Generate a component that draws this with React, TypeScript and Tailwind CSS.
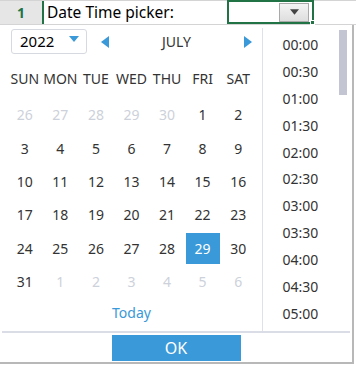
const weeks: { d: number; muted?: boolean }[][] = [
  [26, 27, 28, 29, 30].map((d) => ({ d, muted: true })).concat([{ d: 1 }, { d: 2 }]),
  [3, 4, 5, 6, 7, 8, 9].map((d) => ({ d })),
  [10, 11, 12, 13, 14, 15, 16].map((d) => ({ d })),
  [17, 18, 19, 20, 21, 22, 23].map((d) => ({ d })),
  [24, 25, 26, 27, 28, 29, 30].map((d) => ({ d })),
  [{ d: 31 }].concat([1, 2, 3, 4, 5, 6].map((d) => ({ d, muted: true }))),
];

const days = ["SUN", "MON", "TUE", "WED", "THU", "FRI", "SAT"];
const times = ["00:00", "00:30", "01:00", "01:30", "02:00", "02:30", "03:00", "03:30", "04:00", "04:30", "05:00"];

function Triangle({ dir, className }: { dir: "left" | "right" | "down"; className?: string }) {
  const pts = dir === "left" ? "8,0 8,12 0,6" : dir === "right" ? "0,0 0,12 8,6" : "0,0 10,0 5,6";
  const w = dir === "down" ? 10 : 8;
  const h = dir === "down" ? 6 : 12;
  return (
    <svg width={w} height={h} viewBox={`0 0 ${w} ${h}`} className={className}>
      <polygon points={pts} fill="currentColor" />
    </svg>
  );
}

export default function App() {
  return (
    <div
      className="relative w-[356px] h-[366px] overflow-hidden bg-white text-[#333]"
      style={{ fontFamily: '"Noto Sans", "Open Sans", sans-serif' }}
    >
      {/* spreadsheet row */}
      <div className="flex h-[25px] border-t border-[#d4d4d4] border-b border-b-[#d4d4d4]">
        <div className="w-[42px] bg-[#e6e6e6] flex items-center justify-center text-[14px] font-bold text-[#217346]">1</div>
        <div className="w-[2px] bg-[#217346]" />
        <div className="w-[183px] flex items-center pl-[3px] text-[15.5px] text-black">Date Time picker:</div>
        <div className="relative w-[87px] -mt-px border-2 border-[#217346] flex items-center justify-end pr-[3px]">
          <div className="w-[30px] h-[19px] border border-[#a9a9a9] bg-gradient-to-b from-[#f4f4f4] to-[#dedede] flex items-center justify-center text-[#444]">
            <Triangle dir="down" className="w-[9px] h-[6px]" />
          </div>
          <div className="absolute -right-[3px] -bottom-[3px] w-[5px] h-[5px] bg-[#217346] border border-white" />
        </div>
        <div className="flex-1" />
      </div>

      {/* popup */}
      <div className="w-[354px] h-[339px] border-r-2 border-b-2 border-[#b8b8b8] flex flex-col bg-white">
        <div className="flex h-[305px]">
          {/* calendar */}
          <div className="w-[262px] pt-[4px] pl-[7px]">
            <div className="flex items-center h-[25px]">
              <div className="ml-[4px] w-[76px] h-[25px] border border-[#d6d9e0] rounded-[3px] flex items-center justify-between pl-[8px] pr-[7px] text-[15px] text-black">
                <span>2022</span>
                <Triangle dir="down" className="text-[#3a99d8] -mt-[6px]" />
              </div>
              <Triangle dir="left" className="ml-[14px] text-[#3a99d8]" />
              <div className="flex-1 text-center text-[14px] text-[#333]">JULY</div>
              <Triangle dir="right" className="mr-[10px] text-[#3a99d8]" />
            </div>
            <div className="grid grid-cols-7 w-[249px] mt-[12px] h-[25px] items-center">
              {days.map((d) => (
                <div key={d} className="text-center text-[14px] text-[#333]">{d}</div>
              ))}
            </div>
            <div className="w-[249px] mt-[7px]">
              {weeks.map((w, i) => (
                <div key={i} className="grid grid-cols-7 h-[33.4px] items-center">
                  {w.map((c, j) => {
                    const sel = i === 4 && c.d === 29;
                    return (
                      <div key={j} className="flex justify-center">
                        <div
                          className={
                            "w-[34px] h-[31px] flex items-center justify-center text-[14px] " +
                            (sel ? "bg-[#3a99d8] text-white" : c.muted ? "text-[#cdd1da]" : "text-[#333]")
                          }
                        >
                          {c.d}
                        </div>
                      </div>
                    );
                  })}
                </div>
              ))}
            </div>
            <div className="w-[249px] text-center text-[14px] text-[#3a99d8] mt-[4px]">Today</div>
          </div>

          <div className="w-px bg-[#dfe1e8] mt-[3px] mb-[-2px]" />

          {/* time list */}
          <div className="relative flex-1 pt-[6px]">
            {times.map((t) => (
              <div key={t} className="h-[26.9px] flex items-center justify-center pr-[14px] text-[14px] text-[#333]">
                {t}
              </div>
            ))}
            <div className="absolute right-[5px] top-[5px] w-[8px] h-[65px] bg-[#c3c5d2]" />
          </div>
        </div>

        <div className="h-[2px] bg-[#dadde6] mt-[1px] mx-[2px]" />
        <div className="flex justify-center pt-[2px]">
          <div className="w-[129px] h-[26px] bg-[#3a99d8] text-white text-[16px] flex items-center justify-center">OK</div>
        </div>
      </div>
      <div className="h-[2px] bg-white" />
    </div>
  );
}
